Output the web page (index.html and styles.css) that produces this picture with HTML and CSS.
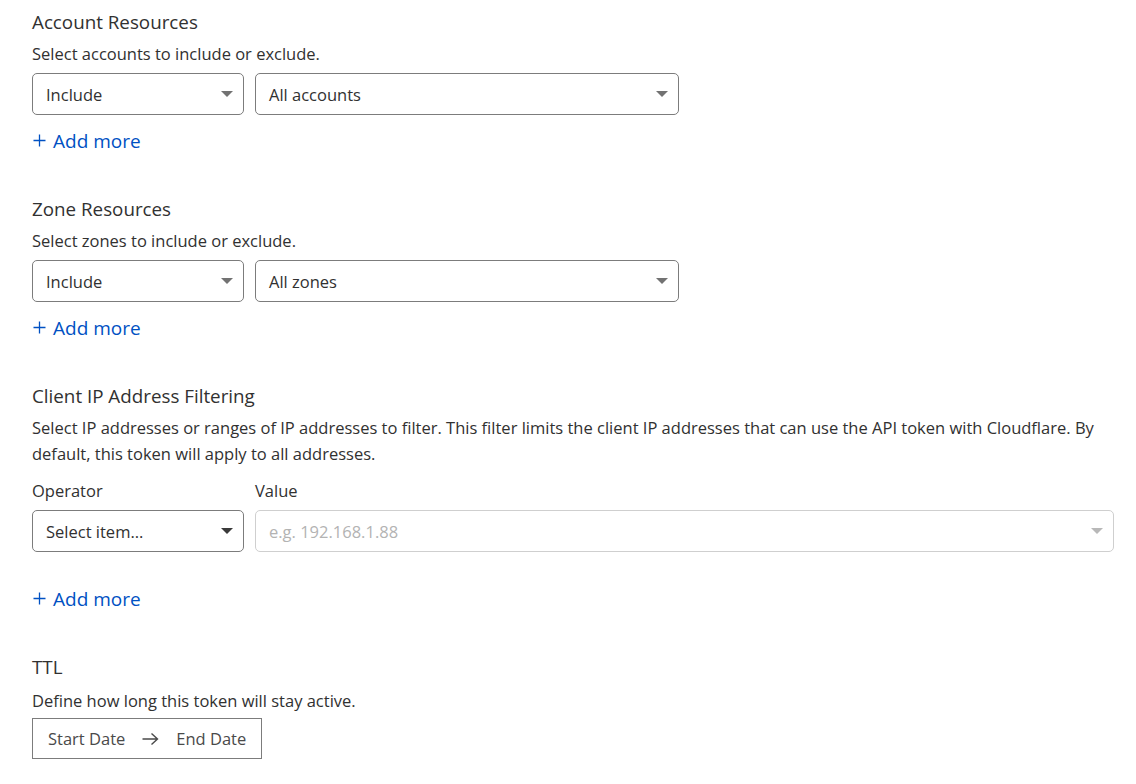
FILE: index.html
```html
<!DOCTYPE html>
<html>
<head>
<meta charset="utf-8">
<link rel="stylesheet" href="styles.css">
</head>
<body>
<div class="page">
  <section class="section">
    <h2 class="title">Account Resources</h2>
    <p class="desc">Select accounts to include or exclude.</p>
    <div class="row">
      <div class="select small"><span>Include</span><i class="caret"></i></div>
      <div class="select medium"><span>All accounts</span><i class="caret"></i></div>
    </div>
    <a class="add"><svg class="plus" width="13" height="13" viewBox="0 0 13 13"><path d="M6.5 0.5v12M0.5 6.5h12" stroke="#0051c3" stroke-width="1.3" fill="none"/></svg>Add more</a>
  </section>

  <section class="section">
    <h2 class="title">Zone Resources</h2>
    <p class="desc">Select zones to include or exclude.</p>
    <div class="row">
      <div class="select small"><span>Include</span><i class="caret"></i></div>
      <div class="select medium"><span>All zones</span><i class="caret"></i></div>
    </div>
    <a class="add"><svg class="plus" width="13" height="13" viewBox="0 0 13 13"><path d="M6.5 0.5v12M0.5 6.5h12" stroke="#0051c3" stroke-width="1.3" fill="none"/></svg>Add more</a>
  </section>

  <section class="section">
    <h2 class="title">Client IP Address Filtering</h2>
    <p class="desc wide">Select IP addresses or ranges of IP addresses to filter. This filter limits the client IP addresses that can use the API token with Cloudflare. By default, this token will apply to all addresses.</p>
    <div class="row fields">
      <div class="field small">
        <label class="label">Operator</label>
        <div class="select"><span>Select item...</span><i class="caret dark"></i></div>
      </div>
      <div class="field grow">
        <label class="label">Value</label>
        <div class="select disabled"><span class="ph">e.g. 192.168.1.88</span><i class="caret light"></i></div>
      </div>
    </div>
    <a class="add spaced"><svg class="plus" width="13" height="13" viewBox="0 0 13 13"><path d="M6.5 0.5v12M0.5 6.5h12" stroke="#0051c3" stroke-width="1.3" fill="none"/></svg>Add more</a>
  </section>

  <section class="section">
    <h2 class="title">TTL</h2>
    <p class="desc ttl">Define how long this token will stay active.</p>
    <div class="daterange">
      <span>Start Date</span>
      <svg class="arrow" width="17" height="14" viewBox="0 0 17 14"><path d="M0.5 7h15M9.5 1.5l6 5.5-6 5.5" fill="none" stroke="#4a4a4a" stroke-width="1.4"/></svg>
      <span>End Date</span>
    </div>
  </section>
</div>
</body>
</html>
```

FILE: styles.css
```css
* { box-sizing: border-box; }
html, body { margin: 0; padding: 0; background: #fff; }
body {
  font-family: "Open Sans", "Noto Sans", sans-serif;
  color: #313131;
}
.page {
  padding: 10px 22px 0 32px;
  width: 1136px;
}
.section { margin-bottom: 43px; }
.title {
  margin: 0;
  font-size: 18.8px;
  font-weight: 400;
  line-height: 24px;
  color: #313131;
}
.desc {
  margin: 7px 0 6px;
  font-size: 16.5px;
  line-height: 26px;
}
.desc.wide { margin-right: -14px; }
.desc.ttl { margin-top: 9px; margin-bottom: 4px; }
.row { display: flex; gap: 11px; }
.select {
  height: 42px;
  border: 1px solid #7c7c7c;
  border-radius: 5px;
  display: flex;
  align-items: center;
  justify-content: space-between;
  padding: 0 10px 0 13px;
  font-size: 16.5px;
  color: #313131;
  background: #fff;
}
.small { width: 212px; flex: none; }
.medium { width: 424px; flex: none; }
.grow { flex: 1; }
.caret {
  width: 0; height: 0;
  border-left: 6px solid transparent;
  border-right: 6px solid transparent;
  border-top: 6px solid #727272;
}
.caret.dark { border-top-color: #3a3a3a; }
.caret.light { border-top-color: #b8b8b8; }
.select.disabled { border-color: #cfcfcf; }
.ph { color: #b3b3b3; }
.label {
  display: block;
  font-size: 16.5px;
  line-height: 26px;
  margin-top: 5px;
  margin-bottom: 6px;
}
.fields { align-items: flex-start; }
.add {
  display: inline-flex;
  align-items: center;
  margin-top: 13px;
  font-size: 19px;
  line-height: 26px;
  color: #0051c3;
}
.add.spaced { margin-top: 34px; }
.plus { margin: 0 7px 0 1px; position: relative; top: -1px; }
.daterange {
  display: inline-flex;
  align-items: center;
  white-space: nowrap;
  height: 41px;
  border: 1px solid #7c7c7c;
  padding: 0 15px;
  font-size: 16.5px;
  color: #4a4a4a;
}
.arrow { flex: none; margin: 0 17px 0 17px; }
```
